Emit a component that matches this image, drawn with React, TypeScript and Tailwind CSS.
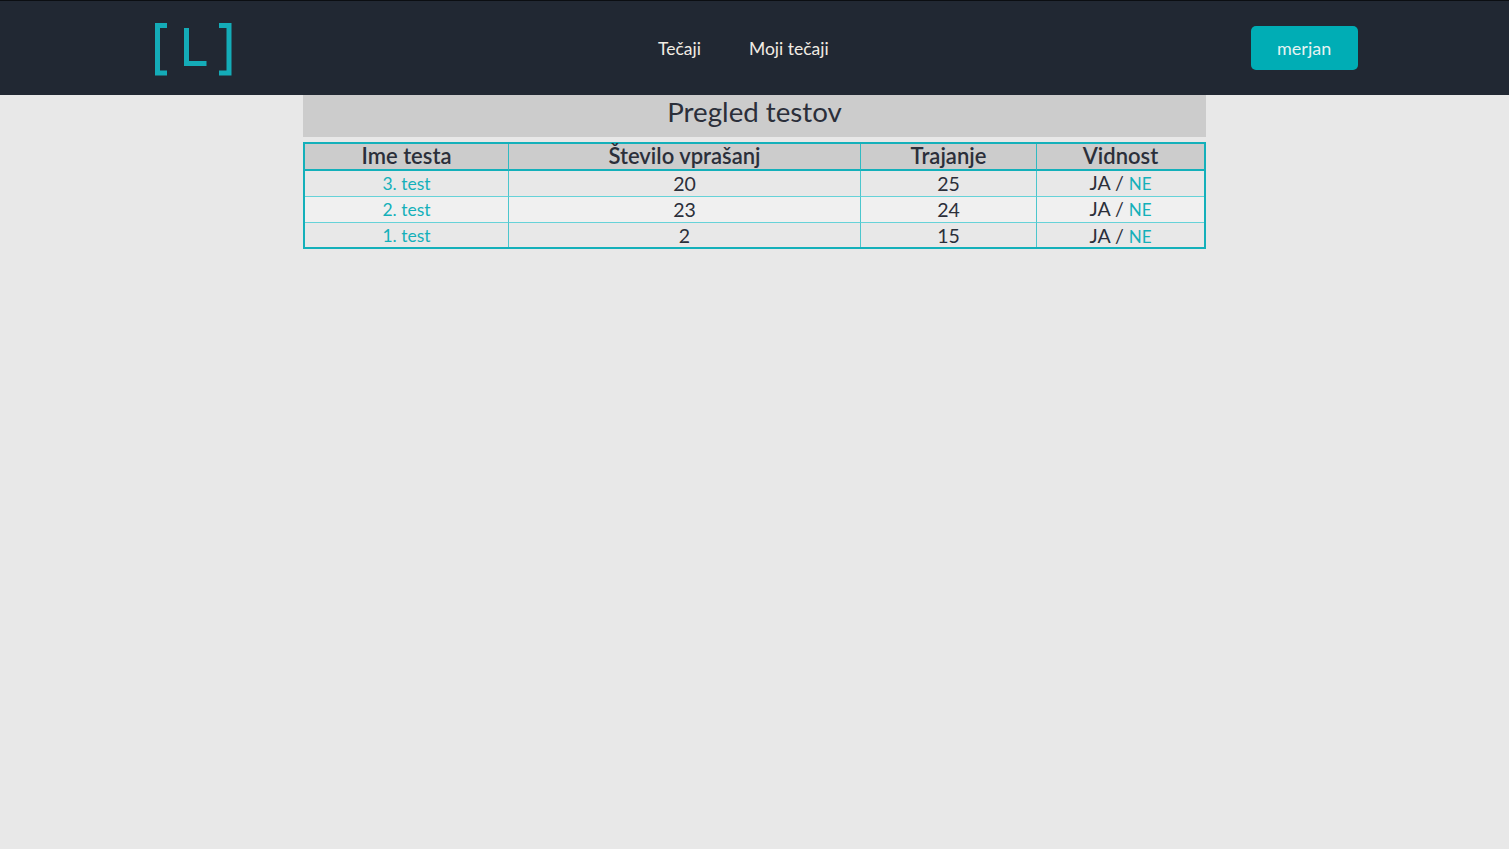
import React from 'react';

const rows = [
  { name: '3. test', questions: 20, duration: 25, bg: 'bg-[#e8e8e8]', line: 'h-[26px] border-b border-b-[#66d2d8]' },
  { name: '2. test', questions: 23, duration: 24, bg: 'bg-[#f0f0f0]', line: 'h-[26px] border-b border-b-[#66d2d8]' },
  { name: '1. test', questions: 2, duration: 15, bg: 'bg-[#e8e8e8]', line: 'h-[24px] pt-[2px]' },
];

const headers = ['Ime testa', 'Število vprašanj', 'Trajanje', 'Vidnost'];

function Logo() {
  return (
    <svg width="78" height="53" viewBox="0 0 78 53" className="block" fill="none" stroke="#14acb8" strokeWidth="5">
      <path d="M12 2.5H2.5V50H12" />
      <path d="M31.5 5V40.5H51.5" />
      <path d="M64 2.5H74V50H64" />
    </svg>
  );
}

export default function App() {
  return (
    <div className="min-h-[849px] bg-[#e8e8e8] font-['Lato','Noto_Sans',sans-serif] text-[#2b2f3a]">
      {/* Navbar */}
      <header className="flex h-[95px] items-center border-t border-[#0b0e12] bg-[#212833]">
        <div className="ml-[155px] mt-[2px] w-[78px] shrink-0">
          <Logo />
        </div>
        <nav className="ml-[425px] mt-[2px] flex gap-[48px] text-[17.5px] text-[#f1ece4]">
          <a>Tečaji</a>
          <a>Moji tečaji</a>
        </nav>
        <button className="ml-[422px] h-[44px] w-[107px] rounded-[5px] bg-[#00adb5] text-[18px] text-[#e6f3f3]">
          merjan
        </button>
      </header>

      {/* Content */}
      <main className="mx-auto w-[903px]">
        <h1 className="h-[42px] bg-[#cccccc] text-center text-[27.7px] leading-[33px]">Pregled testov</h1>
        <table className="mt-[5px] w-[903px] table-fixed border-separate border-spacing-0 border-2 border-[#14b0ba] text-[19.5px]">
          <colgroup>
            <col className="w-[204px]" />
            <col className="w-[352px]" />
            <col className="w-[176px]" />
            <col />
          </colgroup>
          <thead>
            <tr className="bg-[#cccccc]">
              {headers.map((h, i) => (
                <th
                  key={h}
                  className={`h-[27px] border-b-2 border-b-[#14b0ba] p-0 pb-[2px] text-center text-[22px] font-semibold leading-[20px] ${i < 3 ? 'border-r border-r-[#2fbac2]' : ''}`}
                >
                  {h}
                </th>
              ))}
            </tr>
          </thead>
          <tbody>
            {rows.map((row) => (
              <tr key={row.name} className={row.bg}>
                <td className={`${row.line} border-r border-r-[#4cc6cd] text-center text-[17.5px] leading-[20px] text-[#14b0ba]`}>{row.name}</td>
                <td className={`${row.line} border-r border-r-[#4cc6cd] text-center leading-[20px]`}>{row.questions}</td>
                <td className={`${row.line} border-r border-r-[#4cc6cd] text-center leading-[20px]`}>{row.duration}</td>
                <td className={`${row.line} text-center leading-[20px]`}>
                  JA / <span className="text-[17px] text-[#14b0ba]">NE</span>
                </td>
              </tr>
            ))}
          </tbody>
        </table>
      </main>
    </div>
  );
}
